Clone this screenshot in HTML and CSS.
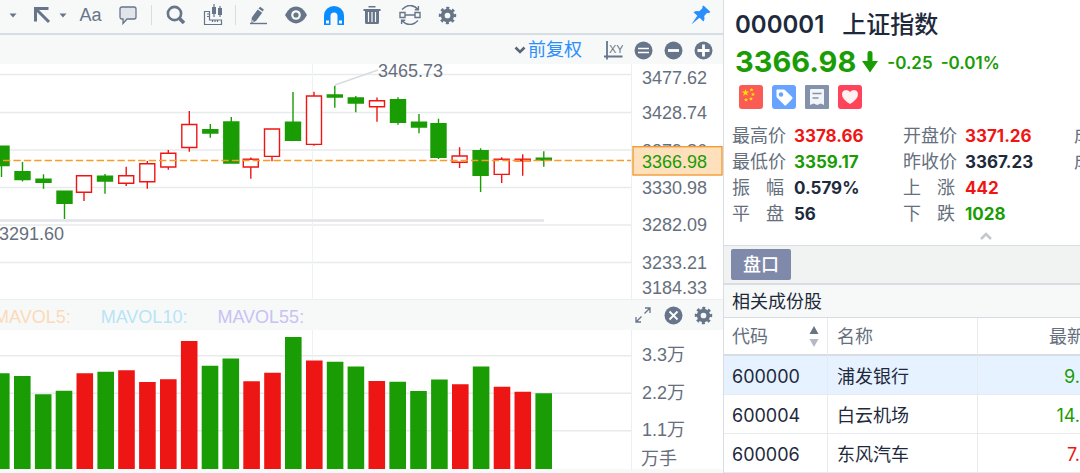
FILE: index.html
```html
<!DOCTYPE html>
<html lang="zh-CN">
<head>
<meta charset="utf-8">
<meta name="viewport" content="width=device-width, initial-scale=1">
<title>上证指数 000001</title>
<link rel="stylesheet" href="styles.css">
</head>
<body>
<svg class="sprite" aria-hidden="true">
  <symbol id="gear" viewBox="-10 -10 20 20">
    <circle r="5" fill="none" stroke="currentColor" stroke-width="4"/>
    <circle r="7.6" fill="none" stroke="currentColor" stroke-width="3.2" stroke-dasharray="3 2.97" transform="rotate(-11)"/>
  </symbol>
  <symbol id="caret" viewBox="0 0 8 5"><path d="M.5.5h7L4 4.5z" fill="currentColor"/></symbol>
</svg>
<div class="app">
  <main class="chart">
    <div class="toolbar" role="toolbar" aria-label="绘图工具">
      <button class="drop first" aria-label="更多"><svg width="8" height="5"><use href="#caret"/></svg></button>
      <button class="arrow-tool" aria-label="箭头"><svg width="18" height="18" viewBox="0 0 18 18" fill="none" stroke="currentColor" stroke-width="3"><path d="M2.500 15.500V2.500H15.500M3 3l13 13"/></svg></button>
      <button class="drop" aria-label="箭头样式"><svg width="8" height="5"><use href="#caret"/></svg></button>
      <button class="tool text-tool" aria-label="文字">Aa</button>
      <button class="tool" aria-label="注释"><svg width="18" height="20" viewBox="0 0 18 20"><path d="M3 2h12q2 0 2 2v8q0 2-2 2H8l-4 4.500V14H3q-2 0-2-2V4q0-2 2-2z" fill="#e1e4e8" stroke="currentColor" stroke-width="1.300"/></svg></button>
      <span class="divider"></span>
      <button class="tool" aria-label="搜索"><svg width="20" height="20" viewBox="0 0 20 20" fill="none" stroke="currentColor"><circle cx="8.500" cy="8.500" r="6.600" stroke-width="2.600"/><path d="M13.500 13.500l4.500 4.500" stroke-width="3.600"/></svg></button>
      <button class="tool" aria-label="测量"><svg width="20" height="22" viewBox="0 0 20 22" fill="none" stroke="currentColor"><path d="M1.500 7.500h5v8.500h12v4.500h-17zM4 10h2.500M4 12.500h2.500M9.500 16v2M12 16v2M14.500 16v2" stroke-width="1.200"/><path d="M11 0v13M17 2v11" stroke-width="1.200"/><path d="M9 3h4v7H9zM15 4h4v7h-4z" fill="currentColor" stroke="none"/></svg></button>
      <span class="divider tight"></span>
      <div class="actions">
        <button class="tool" aria-label="画笔"><svg width="18" height="19" viewBox="0 0 18 19" fill="currentColor"><path d="M9.500 2.500l1.700-1.700 3.600 2.600-1 2.200zM8.700 3.400l4.500 3.400-6 8-4.800 2.400.4-5.600z"/><path d="M1 16.800h17v1.400H1z"/><path d="M3.500 14l1.500 1.200-2 .8z" fill="#f7f9f8"/></svg></button>
        <button class="tool" aria-label="显示"><svg width="22" height="18" viewBox="0 0 22 18"><path d="M0 9Q4.500 .6 11 .6T22 9q-4.500 8.400-11 8.400T0 9z" fill="currentColor"/><circle cx="11" cy="9" r="4.800" fill="#f7f9f8"/><circle cx="11" cy="9" r="2.600" fill="currentColor"/></svg></button>
        <button class="tool active" aria-label="磁吸" aria-pressed="true"><svg width="20" height="19" viewBox="0 0 20 19"><path d="M0 19V9.500a10 9.500 0 0 1 20 0V19h-6.500V10a3.500 3.500 0 0 0-7 0v9z" fill="currentColor"/><path d="M2 14.500h3v3H2zM15 14.500h3v3h-3z" fill="#f7f9f8"/></svg></button>
        <button class="tool" aria-label="删除"><svg width="18" height="20" viewBox="0 0 18 20"><path d="M5.500 1h7v1.500h-7zM.5 4h17v2h-17zM2 6h14v11.500q0 1.500-1.500 1.500h-11Q2 19 2 17.500z" fill="currentColor"/><path d="M5.500 7v10M9 7v10M12.500 7v10" stroke="#f7f9f8" stroke-width="1.200"/></svg></button>
        <button class="tool" aria-label="重置"><svg width="22" height="20" viewBox="0 0 22 20" fill="none" stroke="currentColor" stroke-width="1.400"><path d="M3 4.500Q11-3.500 19 4.200M19.400 1v3.700h-3.600M19 15.500q-8 8-16 .3M2.600 19v-3.700h3.600M6 10h10M1 7.500h5v5H1zM16 7.500h5v5h-5z"/></svg></button>
        <button class="tool" aria-label="设置"><svg width="19" height="19"><use href="#gear"/></svg></button>
      </div>
      <button class="pin" aria-label="固定"><svg width="20" height="20" viewBox="0 0 20 20" fill="currentColor"><path d="M12.500 .5l7 6.500-2 1.200-1.300-.4-3 3.200q1 2.800-.7 5.500l-4-3.700L.3 19.400l6-8.600L2.500 7.200q2.500-1.800 5.800-.9l3.300-3.400-.4-1.200z"/></svg></button>
    </div>

    <div class="subbar">
      <button class="adjust"><svg width="12" height="9" viewBox="0 0 12 9"><path d="M1.500 1.500L6 6l4.500-4.500" fill="none" stroke="#5c6573" stroke-width="2.600"/></svg>前复权</button>
      <button class="round" aria-label="坐标"><svg width="19" height="19" viewBox="0 0 19 19"><path d="M3 0v18.500M0 15.500h18.500" stroke="currentColor" stroke-width="1.800" fill="none"/><text x="5" y="12" class="axis-icon">XY</text></svg></button>
      <button class="round" aria-label="还原"><svg width="19" height="19" viewBox="0 0 19 19"><circle cx="9.500" cy="9.500" r="9" fill="currentColor"/><path d="M4 7.500h11M4 11.500h11" stroke="#fff" stroke-width="1.600"/></svg></button>
      <button class="round" aria-label="缩小"><svg width="19" height="19" viewBox="0 0 19 19"><circle cx="9.500" cy="9.500" r="9" fill="currentColor"/><path d="M4 9.500h11" stroke="#fff" stroke-width="2.800"/></svg></button>
      <button class="round" aria-label="放大"><svg width="19" height="19" viewBox="0 0 19 19"><circle cx="9.500" cy="9.500" r="9" fill="currentColor"/><path d="M3.500 9.500h12M9.500 3.500v12" stroke="#fff" stroke-width="2.800"/></svg></button>
    </div>

    <div class="pane price-pane">
      <svg class="plot" role="img" aria-label="K线图">
        <g transform="translate(0 -64)">
          <g class="grid">
            <line x1="0" x2="100%" y1="74.500" y2="74.500"/><line x1="0" x2="100%" y1="112.500" y2="112.500"/><line x1="0" x2="100%" y1="150" y2="150"/><line x1="0" x2="100%" y1="187.500" y2="187.500"/><line x1="0" x2="100%" y1="225" y2="225"/><line x1="0" x2="100%" y1="262.500" y2="262.500"/>
            <line class="faint" x1="312.500" x2="312.500" y1="64" y2="300"/>
          </g>
          <path class="floor" d="M0 220.500H544"/>
          <path class="leader" d="M335 85L378 70"/>
          <g class="down">
            <path d="M1.500 146V177M-6 146.300h15v19.200h-15z"/>
            <path d="M22.500 162V181.500M15 171.700h15v7.800h-15z"/>
            <path d="M43.500 174.300V188.700M36 179.200h15v3h-15z"/>
            <path d="M64.500 191V219M57 191.300h15v12h-15z"/>
            <path d="M105 174V193.700M97.500 176.300h15v4.700h-15z"/>
            <path d="M210.300 124V137.700M202.800 129.600h15v3.500h-15z"/>
            <path d="M231.300 117V163M223.800 122h15v41h-15z"/>
            <path d="M293 92V141M285.500 122.300h15v18h-15z"/>
            <path d="M334.800 85.700V107.700M327.300 95h15v2h-15z"/>
            <path d="M355.800 96V112.300M348.300 98h15v5h-15z"/>
            <path d="M398 97.300V124.700M390.500 99.700h15v22.600h-15z"/>
            <path d="M419 114V133.300M411.500 122.300h15v4.700h-15z"/>
            <path d="M438.500 118.700V159M431 123.700h15v33.500h-15z"/>
            <path d="M480.600 148.300V192M473.100 150.700h15v24.500h-15z"/>
            <path d="M543.800 151.300V166.700M536.300 158.200h15v1.800h-15z"/>
          </g>
          <g class="up">
            <path d="M84 192.500V201M76.500 175.800h15v16.500h-15z"/>
            <path d="M126.200 166.700V175.500M126.200 183.500V186M118.700 175.800h15v7.500h-15z"/>
            <path d="M147.300 161V163.500M147.300 182V188.700M139.800 163.700h15v18h-15z"/>
            <path d="M168.300 150V153M168.300 167V169.700M160.800 153.200h15v13.800h-15z"/>
            <path d="M189.300 111V124M189.300 147.500V151.700M181.800 124.500h15v23h-15z"/>
            <path d="M250.800 157.500V159M250.800 167V178.700M243.300 159.300h15v7.700h-15z"/>
            <path d="M272 156.500V161.300M264.500 129h15v27.400h-15z"/>
            <path d="M314 91.700V95.500M314 144.500V145.700M306.500 96h15v48.400h-15z"/>
            <path d="M377 97.500V100.500M377 107V121.700M369.500 100.700h15v6.100h-15z"/>
            <path d="M459.600 147.300V156M459.600 162.500V168M452.100 156h15v6.300h-15z"/>
            <path d="M501.700 157.300V159M501.700 174.500V183M494.200 159.200h15v15.200h-15z"/>
            <path d="M522.700 154.300V159M522.700 161V175.700M515.200 159.200h15v1.600h-15z"/>
          </g>
          <line class="current-line" x1="3" x2="100%" y1="160.500" y2="160.500"/>
          <text class="mark" x="378" y="77">3465.73</text>
          <text class="mark" x="-1" y="240">3291.60</text>
        </g>
      </svg>
      <svg class="axis" role="img" aria-label="价格刻度">
        <g transform="translate(0 -64)">
          <text x="10" y="84">3477.62</text>
          <text x="10" y="119">3428.74</text>
          <text x="10" y="157">3379.86</text>
          <text x="10" y="194">3330.98</text>
          <text x="10" y="231">3282.09</text>
          <text x="10" y="269">3233.21</text>
          <text x="10" y="294">3184.33</text>
          <rect class="tag" x="1" y="146.700" width="89" height="28.300"/>
          <text class="tag-text" x="10" y="168">3366.98</text>
        </g>
      </svg>
    </div>

    <div class="indicator">
      <ul class="legend">
        <li class="ma5">MAVOL5:</li>
        <li class="ma10">MAVOL10:</li>
        <li class="ma55">MAVOL55:</li>
      </ul>
      <button class="round" aria-label="展开"><svg width="16" height="16" viewBox="0 0 16 16" fill="none" stroke="currentColor" stroke-width="1.300"><path d="M10 1h5v5M15 1L9.500 6.500M6 15H1v-5M1 15l5.500-5.500"/></svg></button>
      <button class="round" aria-label="关闭"><svg width="19" height="19" viewBox="0 0 19 19"><circle cx="9.500" cy="9.500" r="9" fill="currentColor"/><path d="M5.500 5.500l8 8M13.500 5.500l-8 8" stroke="#fff" stroke-width="1.800"/></svg></button>
      <button class="round" aria-label="指标设置"><svg width="19" height="19"><use href="#gear"/></svg></button>
    </div>

    <div class="pane volume-pane">
      <svg class="plot" role="img" aria-label="成交量">
        <g transform="translate(0 -330)">
          <g class="grid">
            <line x1="0" x2="100%" y1="355.700" y2="355.700"/><line x1="0" x2="100%" y1="393.300" y2="393.300"/><line x1="0" x2="100%" y1="430.700" y2="430.700"/>
            <line class="faint" x1="312.500" x2="312.500" y1="330" y2="469"/>
          </g>
          <path class="vol-down" d="M-7 373.300h16.600V469H-7zM14 376h16.600v93H14zM34.900 394.300h16.600V469H34.900zM55.700 390.700h16.600V469H55.700zM97.400 371.700H114V469H97.400zM201.700 365.700h16.600V469h-16.600zM222.500 358.500h16.600V469h-16.600zM285 337h16.600v132H285zM326.800 361.700h16.600V469h-16.600zM347.600 366.500h16.600V469h-16.600zM389.400 381.700H406V469h-16.600zM410.200 391h16.600v78h-16.600zM431.100 379.500h16.600V469h-16.600zM472.800 366.500h16.600V469h-16.600zM535.400 393.200H552V469h-16.600z"/>
          <path class="vol-up" d="M76.500 373.200h16.600V469H76.500zM118.200 370.300h16.600V469h-16.600zM139.100 382h16.600v87h-16.600zM160 379.300h16.600V469H160zM180.900 341h16.600v128h-16.600zM243.300 381.200h16.600V469h-16.600zM264.200 372.700h16.600V469h-16.600zM306 360.500h16.600V469H306zM368.500 381h16.600v88h-16.600zM452 384.200h16.600V469H452zM493.700 386.700h16.600V469h-16.600zM514.500 391.700h16.600V469h-16.600z"/>
        </g>
      </svg>
      <svg class="axis" role="img" aria-label="成交量刻度">
        <g transform="translate(0 -330)">
          <text x="10" y="361">3.3万</text>
          <text x="10" y="399">2.2万</text>
          <text x="10" y="436">1.1万</text>
          <text x="9" y="465">万手</text>
        </g>
      </svg>
    </div>
  </main>

  <aside class="quote">
    <header class="summary">
      <h1><span class="code">000001</span><span>上证指数</span></h1>
      <p class="last green"><strong>3366.98</strong>
        <svg width="18" height="22" viewBox="0 0 18 22" aria-hidden="true"><path d="M9 0q2.500 0 2.500 2v8H17l-8 11.500L1 10h5.500V2q0-2 2.500-2z" fill="currentColor"/></svg>
        <span class="change">-0.25</span><span class="change">-0.01%</span></p>
      <div class="badges">
        <svg viewBox="0 0 24 24" role="img" aria-label="中国"><rect width="24" height="24" rx="3" fill="#fb5b55"/><path d="M6.500 4l.9 2.600h2.700L8 8.200l.8 2.600-2.300-1.600-2.300 1.600.8-2.600-2.100-1.600h2.700zM12.500 3l.6 1.100 1.300.2-.9.900.2 1.200-1.200-.6-1.200.6.2-1.200-.9-.9 1.300-.2zM14 7.500l.6 1.100 1.300.2-.9.900.2 1.200-1.200-.6-1.200.6.2-1.200-.9-.9 1.300-.2zM12 12l.6 1.100 1.300.2-.9.900.2 1.200-1.200-.6-1.200.6.2-1.200-.9-.9 1.300-.2zM7 13l.6 1.100 1.300.2-.9.900.2 1.200-1.200-.6-1.200.6.2-1.200-.9-.9 1.300-.2z" fill="#ffe100"/></svg>
        <svg viewBox="0 0 24 24" role="img" aria-label="标签"><rect width="24" height="24" rx="3" fill="#66a4ff"/><path d="M5 4.500h6.500q1 0 1.700.7l6.900 6.900q1 1 0 2l-5.800 5.800q-1 1-2 0L5.400 13q-.9-.8-.9-1.800V5q0-.5.500-.5z" fill="#fff"/><circle cx="9" cy="9.500" r="2.200" fill="#66a4ff"/></svg>
        <svg viewBox="0 0 24 24" role="img" aria-label="公告"><rect width="24" height="24" rx="1" fill="#8492ac"/><path d="M6 4h12q1 0 1 1v15l-3.200-1.500-3.600 1.500-3.600-1.500L5 20V5q0-1 1-1z" fill="#f2f5fa"/><path d="M7.500 8.500h9M7.500 13h6" stroke="#8492ac" stroke-width="1.400"/></svg>
        <svg viewBox="0 0 24 24" role="img" aria-label="自选"><rect width="24" height="24" rx="3" fill="#fe435b"/><path d="M12 7q-1.600-2-4-2Q4 5.300 4 9.500q0 4.500 8 9.500 8-5 8-9.500Q20 5.300 16 5q-2.400 0-4 2z" fill="#fff0f1"/></svg>
      </div>
      <dl class="stats">
        <div><dt>最高价</dt><dd class="red">3378.66</dd></div>
        <div><dt>开盘价</dt><dd class="red">3371.26</dd></div>
        <div><dt>成</dt></div>
        <div><dt>最低价</dt><dd class="green">3359.17</dd></div>
        <div><dt>昨收价</dt><dd>3367.23</dd></div>
        <div><dt>成</dt></div>
        <div><dt><span>振</span><span>幅</span></dt><dd>0.579%</dd></div>
        <div><dt><span>上</span><span>涨</span></dt><dd class="red">442</dd></div>
        <div></div>
        <div><dt><span>平</span><span>盘</span></dt><dd>56</dd></div>
        <div><dt><span>下</span><span>跌</span></dt><dd class="green">1028</dd></div>
      </dl>
      <button class="collapse" aria-label="收起"><svg width="12" height="8" viewBox="0 0 12 8"><path d="M1 7l5-5 5 5" fill="none" stroke="currentColor" stroke-width="2.600"/></svg></button>
    </header>
    <nav class="tabs"><button class="tab">盘口</button></nav>
    <h2>相关成份股</h2>
    <table>
      <colgroup><col class="col-code"><col class="col-name"><col></colgroup>
      <thead>
        <tr>
          <th scope="col"><div class="sortable">代码<svg width="10" height="21" viewBox="0 0 10 21" aria-hidden="true"><path d="M5 0l4.500 8h-9z" fill="#687383"/><path d="M.5 13h9L5 21z" fill="#b3bac3"/></svg></div></th>
          <th scope="col">名称</th>
          <th scope="col" class="latest">最新</th>
        </tr>
      </thead>
      <tbody>
        <tr class="selected"><td>600000</td><td>浦发银行</td><td class="num green">9.</td></tr>
        <tr><td>600004</td><td>白云机场</td><td class="num green">14.</td></tr>
        <tr><td>600006</td><td>东风汽车</td><td class="num red">7.</td></tr>
      </tbody>
    </table>
  </aside>
</div>
</body>
</html>
```

FILE: styles.css
```css
:root {
  --ink: #1e2a3c;
  --muted: #666f7d;
  --icon: #67758a;
  --line: #d8dde4;
  --panel: #f7f9f8;
  --red: #f01515;
  --green: #1a9c04;
  --blue: #2b8ffb;
}

* { box-sizing: border-box; }

body {
  margin: 0;
  overflow: hidden;
  background: #fff;
  color: var(--ink);
  font: 18px/26px Inter, "Noto Sans CJK SC", sans-serif;
}

h1, h2, p, dl, dd, ul { margin: 0; padding: 0; }

button {
  display: flex;
  align-items: center;
  justify-content: center;
  flex: none;
  padding: 0;
  border: 0;
  background: none;
  color: var(--icon);
  font: inherit;
}

svg { flex: none; }
.sprite { position: absolute; width: 0; height: 0; }
.red { color: var(--red); }
.green { color: var(--green); }

.app {
  display: grid;
  grid-template-columns: minmax(0, 1fr) 357px;
  min-height: 100vh;
}

/* Chart side */
.chart {
  min-width: 0;
  overflow: hidden;
  background: var(--panel);
  font-family: "Liberation Sans", "Noto Sans CJK SC", sans-serif;
}

.toolbar {
  display: flex;
  align-items: center;
  height: 35px;
  padding: 0 12px 3px 4px;
  border-bottom: 2px solid var(--line);
}
.drop { width: 18px; height: 24px; }
.drop.first { margin-right: 8px; }
.arrow-tool { width: 24px; height: 24px; }
.tool { width: 37px; height: 24px; }
.text-tool { font-size: 18px; }
.tool.active { color: #0a8cff; }
.actions { display: flex; gap: 1px; }
.divider { width: 1px; height: 20px; margin: 0 5px; background: var(--line); }
.divider.tight { margin: 0 3px 0 4px; }
.pin { margin-left: auto; color: var(--blue); }

.subbar {
  display: flex;
  align-items: center;
  justify-content: flex-end;
  height: 29px;
  padding: 1px 5px 0 0;
}
.adjust { gap: 2px; margin-right: 16px; color: var(--blue); }
.round { width: 30px; height: 24px; }
.axis-icon { font-size: 11px; fill: currentColor; }

.pane { display: flex; background: #fff; }
.price-pane { height: 235px; }
.volume-pane { height: 139px; }
.plot { flex: 1 1 0; min-width: 0; height: 100%; }
.axis { width: 92px; height: 100%; border-left: 1px solid #eceeef; }
.axis text { font-size: 18px; fill: var(--muted); }
.grid line { stroke: #e8ebeb; stroke-width: 1.5; }
.grid .faint { stroke: #eff1f2; stroke-width: 1; }
.floor { stroke: #e2e3ed; stroke-width: 2.6; }
.leader { stroke: #d8dce1; stroke-width: 1.5; }
.mark { font-size: 18px; fill: var(--muted); }
.down path { fill: var(--green); stroke: var(--green); stroke-width: 1.4; }
.up path { fill: #fff; stroke: var(--red); stroke-width: 1.4; }
.current-line { stroke: #f99b25; stroke-width: 1.4; stroke-dasharray: 7.4 3; }
.axis .tag { fill: #fee0bd; stroke: #f39b31; stroke-width: 1.4; }
.axis .tag-text { fill: var(--green); }
.vol-down { fill: var(--green); }
.vol-up { fill: #ee1515; }

.indicator {
  display: flex;
  align-items: center;
  height: 31px;
  padding-right: 5px;
  border-top: 1px solid #eceeef;
}
.legend { display: flex; gap: 30px; flex: 1; margin-left: -6px; padding-top: 4px; list-style: none; }
.ma5 { color: #fcd9bb; }
.ma10 { color: #b8e4f6; }
.ma55 { color: #c9c1f4; }

/* Quote side */
.quote { min-width: 0; overflow: hidden; border-left: 1px solid var(--line); }

.summary { height: 245px; padding: 8px 0 0 8px; overflow: hidden; }
h1 {
  display: flex;
  gap: 18px;
  padding-left: 3px;
  font-size: 24px;
  font-weight: 500;
  line-height: 34px;
}
.code { font-weight: 600; }
.last {
  display: flex;
  align-items: center;
  height: 40px;
  padding-left: 3px;
}
.last strong { font-size: 29px; font-weight: 700; }
.last svg { margin: 0 8px 0 5px; }
.change { margin-right: 8px; padding-top: 2px; font-size: 17px; font-weight: 600; }
.badges { display: flex; gap: 9px; padding: 3px 0 0 7px; }
.badges svg { width: 24px; height: 24px; }

.stats {
  display: grid;
  grid-template-columns: 171px 171px 60px;
  padding-top: 14px;
}
.stats div { display: flex; min-height: 26px; }
.stats dt {
  display: flex;
  justify-content: space-between;
  width: 54px;
  margin-right: 8px;
  color: var(--muted);
}
.stats dt span:last-child { margin-right: 2px; }
.stats dd { font-size: 17px; font-weight: 700; }
.collapse { width: 100%; height: 18px; padding-left: 159px; color: #c3c7ce; }

.tabs {
  display: flex;
  height: 40px;
  padding: 3px 7px;
  border: solid var(--line);
  border-width: 1px 0 2px;
  background: #f1f3f2;
}
.tab {
  height: 31px;
  padding: 0 12px;
  border-radius: 2px;
  background: #7f8aaa;
  color: #fff;
  font-weight: 500;
}
h2 {
  height: 33px;
  padding-left: 8px;
  border-bottom: 1px solid var(--line);
  background: var(--panel);
  font-size: 18px;
  font-weight: 400;
  line-height: 34px;
}

table { width: 100%; border-collapse: separate; border-spacing: 0; table-layout: fixed; }
.col-code { width: 104px; }
.col-name { width: 150px; }
th, td {
  height: 39px;
  padding: 3px 9px 0;
  border-right: 1px solid #e8ebee;
  border-bottom: 1px solid #e8ebee;
  font-weight: 400;
  text-align: left;
  white-space: nowrap;
}
th { height: 38px; padding-top: 1px; border-bottom: 2px solid var(--line); color: var(--muted); }
th:first-child, td:first-child { padding-left: 8px; }
th:last-child, td:last-child { border-right: 0; }
.latest { padding: 1px 0 0 71px; overflow: hidden; }
.num { padding-right: 0; text-align: right; }
.sortable { display: flex; align-items: center; justify-content: space-between; }
.sortable svg { margin-right: -1px; }
.selected td { background: #e6f2ff; }
```
